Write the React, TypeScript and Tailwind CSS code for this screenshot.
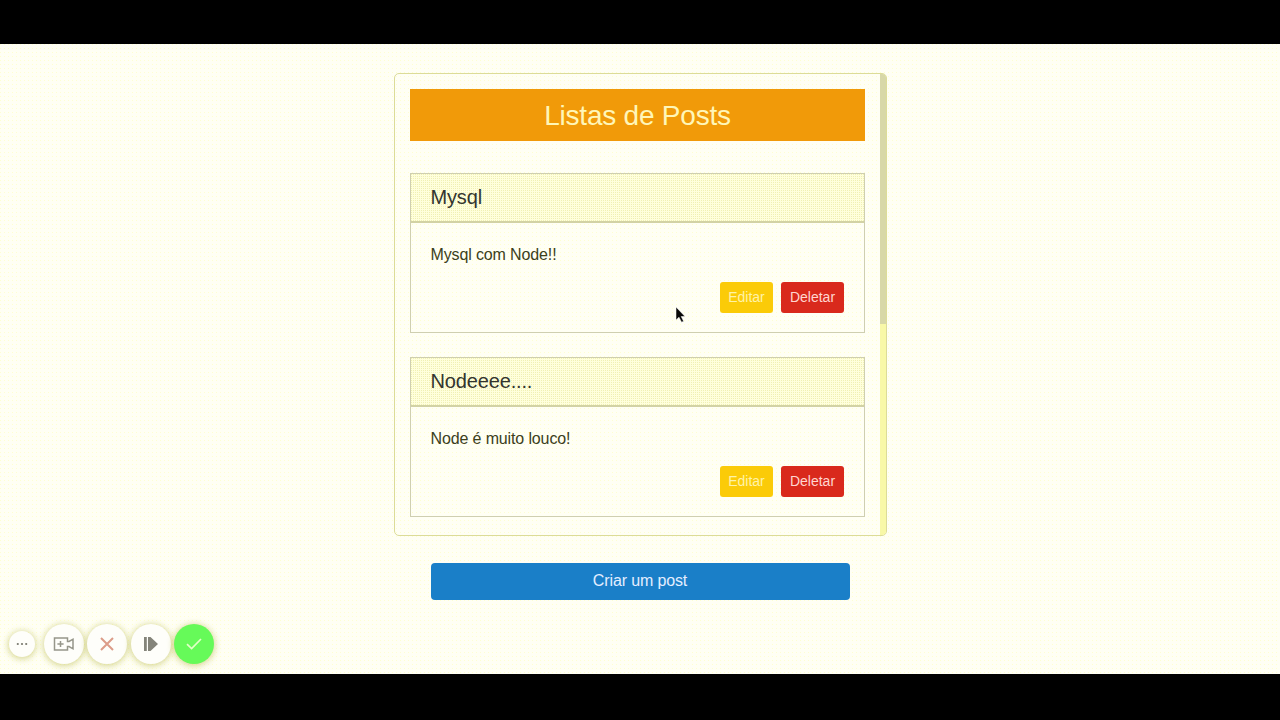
import React from "react";

const posts = [
  { title: "Mysql", body: "Mysql com Node!!" },
  { title: "Nodeeee....", body: "Node é muito louco!" },
];

function Post({ title, body }: { title: string; body: string }) {
  return (
    <article className="h-[160px] shrink-0 border border-[#cfcfb0]">
      <h2 className="flex h-[49px] items-center border-b-2 border-[#d2d2a4] bg-[#ffffdc] bg-[conic-gradient(at_1px_1px,transparent_75%,#f0f0b4_0)] bg-[length:2px_2px] pb-px pl-[19.5px] text-[20px] tracking-[-0.15px] text-[#33352f]">
        {title}
      </h2>
      <p className="mt-[20px] pl-[19.5px] text-[16px] leading-6 tracking-[-0.13px] text-[#3c4020]">{body}</p>
      <div className="mt-[15px] flex justify-end gap-2 pr-5 text-[14px]">
        <button className="h-[31px] w-[53px] rounded-[3px] bg-[#fbcb08] text-[#fff3a8]">Editar</button>
        <button className="h-[31px] w-[63px] rounded-[3px] bg-[#d9291c] text-[#ffd6d0]">Deletar</button>
      </div>
    </article>
  );
}

function Round({ children, className }: { children: React.ReactNode; className: string }) {
  return (
    <div className={`flex shrink-0 items-center justify-center rounded-full ${className}`}>{children}</div>
  );
}

const shadow = "bg-[#fefefa] shadow-[0_1px_6px_1px_rgba(160,160,20,0.42)]";

export default function App() {
  return (
    <div className="flex h-[720px] w-[1280px] flex-col overflow-hidden bg-black font-['Liberation_Sans',Arial,sans-serif]">
      <main className="relative mt-[44px] flex h-[630px] flex-col items-center bg-[#fffff4] bg-[conic-gradient(at_1px_1px,transparent_75%,#ffffd0_0)] bg-[length:4px_4px]">
        <section className="mt-[29px] ml-[1px] flex h-[463px] w-[493px] shrink-0 overflow-hidden rounded-[5px] border border-[#dcdc98]">
          <div className="flex w-[485px] flex-col pl-[15px] pr-[15px] pt-[15px]">
            <h1 className="mb-8 flex h-[52px] shrink-0 items-center justify-center bg-[#f19a09] pt-px text-[28px] tracking-[-0.22px] text-[#fff6b8]">
              Listas de Posts
            </h1>
            <div className="flex flex-col gap-6">
              {posts.map((p) => (
                <Post key={p.title} {...p} />
              ))}
            </div>
          </div>
          <div className="w-[6px] bg-[#f8f8a8]">
            <div className="h-[250px] bg-[#d8d8a8]" />
          </div>
        </section>
        <button className="mt-[27px] h-[37px] w-[419px] rounded-[4px] bg-[#1a7fc8] pb-px text-[16px] tracking-[-0.13px] text-[#e4eeff]">
          Criar um post
        </button>
        <div className="absolute bottom-[10px] left-[9px] flex items-center">
          <Round className={`mr-[9px] size-[26px] ${shadow}`}>
            <svg width="12" height="4" viewBox="0 0 12 4" fill="#77776c">
              <circle cx="1.8" cy="2" r="1.1" /><circle cx="6" cy="2" r="1.1" /><circle cx="10.2" cy="2" r="1.1" />
            </svg>
          </Round>
          <Round className={`mr-[3px] size-[40px] ${shadow}`}>
            <svg width="22" height="16" viewBox="0 0 22 16" fill="none" stroke="#96968a" strokeWidth="1.5">
              <path d="M1.5 2h13v3.5h1.5l4-2.3v9.6l-4-2.3h-1.5V14h-13zM7.5 4.9v6.2M4.4 8h6.2" />
            </svg>
          </Round>
          <Round className={`mr-[4px] size-[40px] ${shadow}`}>
            <svg width="14" height="14" viewBox="0 0 14 14" fill="none" stroke="#dc9c88" strokeWidth="2">
              <path d="M1 1l12 12M13 1L1 13" />
            </svg>
          </Round>
          <Round className={`mr-[3px] size-[40px] ${shadow}`}>
            <svg width="16" height="16" viewBox="0 0 16 16" fill="#84847a">
              <path d="M1 1h2.8v14H1zM5 1h2.5l7.5 7-7.5 7H5z" />
            </svg>
          </Round>
          <Round className="size-[40px] bg-[#66fa59] shadow-[0_1px_6px_1px_rgba(160,160,20,0.42)]">
            <svg width="16" height="12" viewBox="0 0 16 12" fill="none" stroke="#e4ffc8" strokeWidth="1.7">
              <path d="M1 6.2l4.6 4.3L15 1" />
            </svg>
          </Round>
        </div>
        <svg className="absolute left-[675px] top-[263px]" width="12" height="17" viewBox="0 0 12 17">
          <path d="M1 0v13l3-2.8 2.6 5 2-1-2.4-4.7H10z" fill="#080808" stroke="#fff" strokeWidth=".5" />
        </svg>
      </main>
    </div>
  );
}
